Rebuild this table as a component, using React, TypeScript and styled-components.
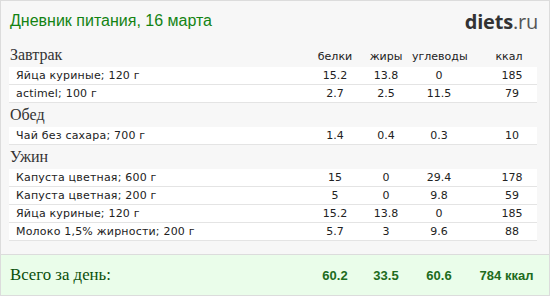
import styled, { createGlobalStyle } from "styled-components";

const GlobalStyle = createGlobalStyle`
  html, body {
    margin: 0;
    padding: 0;
    background: #ffffff;
  }
`;

const COLS = "1fr 50px 52px 54px 71px";

const Frame = styled.div`
  width: 550px;
  height: 296px;
  box-sizing: border-box;
  border: 1px solid #dcdcdc;
  background: #f7f7f7;
  display: flex;
  flex-direction: column;
  font-family: "DejaVu Sans", Verdana, sans-serif;
  color: #222;
`;

const Header = styled.div`
  height: 40px;
  display: flex;
  align-items: center;
  justify-content: space-between;
  padding: 0 11px 2px 9px;
`;

const Title = styled.h1`
  margin: 0;
  font-family: "Liberation Sans", Arial, sans-serif;
  font-weight: normal;
  font-size: 16px;
  color: #138313;
`;

const Logo = styled.div`
  font-family: "Open Sans", "DejaVu Sans", sans-serif;
  font-size: 20px;
  letter-spacing: -0.2px;
  color: #333;

  b {
    font-weight: 700;
  }

  span {
    font-weight: 400;
    color: #555;
  }
`;

const Table = styled.div`
  padding: 0 12px 0 8px;
`;

const SectionHead = styled.div`
  display: grid;
  grid-template-columns: ${COLS};
  height: 24px;
  align-items: center;
`;

const SectionTitle = styled.div`
  font-family: "Liberation Serif", "Times New Roman", serif;
  font-size: 16px;
  color: #333;
  padding-left: 1px;
`;

const ColHead = styled.div<{ $shift?: number }>`
  font-size: 11px;
  text-align: center;
  color: #222;
  padding-left: ${({ $shift }) => $shift ?? 0}px;
  padding-top: 2px;
`;

const Row = styled.div`
  display: grid;
  grid-template-columns: ${COLS};
  height: 17px;
  align-items: center;
  background: #ffffff;
  border-bottom: 1px solid #e4e4e4;
  font-size: 11px;
`;

const Name = styled.div`
  padding-left: 7px;
  white-space: nowrap;
  letter-spacing: 0.2px;
`;

const Num = styled.div<{ $shift?: number }>`
  text-align: center;
  padding-left: ${({ $shift }) => $shift ?? 0}px;
`;

const Total = styled.div`
  margin-top: auto;
  height: 40px;
  border-top: 1px solid #dcdcdc;
  background: #eafdea;
  display: grid;
  grid-template-columns: ${COLS};
  align-items: center;
  padding: 0 12px 0 8px;
`;

const TotalLabel = styled.div`
  font-family: "Liberation Serif", "Times New Roman", serif;
  font-size: 16.8px;
  color: #0b4f0b;
  padding-left: 1px;
`;

const TotalNum = styled.div<{ $shift?: number }>`
  font-family: "Liberation Sans", Arial, sans-serif;
  font-weight: 700;
  font-size: 13px;
  color: #206b20;
  text-align: center;
  padding-left: ${({ $shift }) => $shift ?? 0}px;
`;

type Item = { name: string; p: string; f: string; c: string; k: string };

const meals: { title: string; items: Item[] }[] = [
  {
    title: "Завтрак",
    items: [
      { name: "Яйца куриные; 120 г", p: "15.2", f: "13.8", c: "0", k: "185" },
      { name: "actimel; 100 г", p: "2.7", f: "2.5", c: "11.5", k: "79" },
    ],
  },
  {
    title: "Обед",
    items: [{ name: "Чай без сахара; 700 г", p: "1.4", f: "0.4", c: "0.3", k: "10" }],
  },
  {
    title: "Ужин",
    items: [
      { name: "Капуста цветная; 600 г", p: "15", f: "0", c: "29.4", k: "178" },
      { name: "Капуста цветная; 200 г", p: "5", f: "0", c: "9.8", k: "59" },
      { name: "Яйца куриные; 120 г", p: "15.2", f: "13.8", c: "0", k: "185" },
      { name: "Молоко 1,5% жирности; 200 г", p: "5.7", f: "3", c: "9.6", k: "88" },
    ],
  },
];

export default function App() {
  return (
    <>
      <GlobalStyle />
      <Frame>
        <Header>
          <Title>Дневник питания, 16 марта</Title>
          <Logo>
            <b>diets</b>
            <span>.ru</span>
          </Logo>
        </Header>
        <Table>
          {meals.map((meal, i) => (
            <div key={meal.title}>
              <SectionHead>
                <SectionTitle>{meal.title}</SectionTitle>
                {i === 0 && (
                  <>
                    <ColHead>белки</ColHead>
                    <ColHead>жиры</ColHead>
                    <ColHead>углеводы</ColHead>
                    <ColHead $shift={15}>ккал</ColHead>
                  </>
                )}
              </SectionHead>
              {meal.items.map((it, j) => (
                <Row key={j}>
                  <Name>{it.name}</Name>
                  <Num>{it.p}</Num>
                  <Num>{it.f}</Num>
                  <Num>{it.c}</Num>
                  <Num $shift={21}>{it.k}</Num>
                </Row>
              ))}
            </div>
          ))}
        </Table>
        <Total>
          <TotalLabel>Всего за день:</TotalLabel>
          <TotalNum>60.2</TotalNum>
          <TotalNum>33.5</TotalNum>
          <TotalNum>60.6</TotalNum>
          <TotalNum $shift={10}>784 ккал</TotalNum>
        </Total>
      </Frame>
    </>
  );
}
